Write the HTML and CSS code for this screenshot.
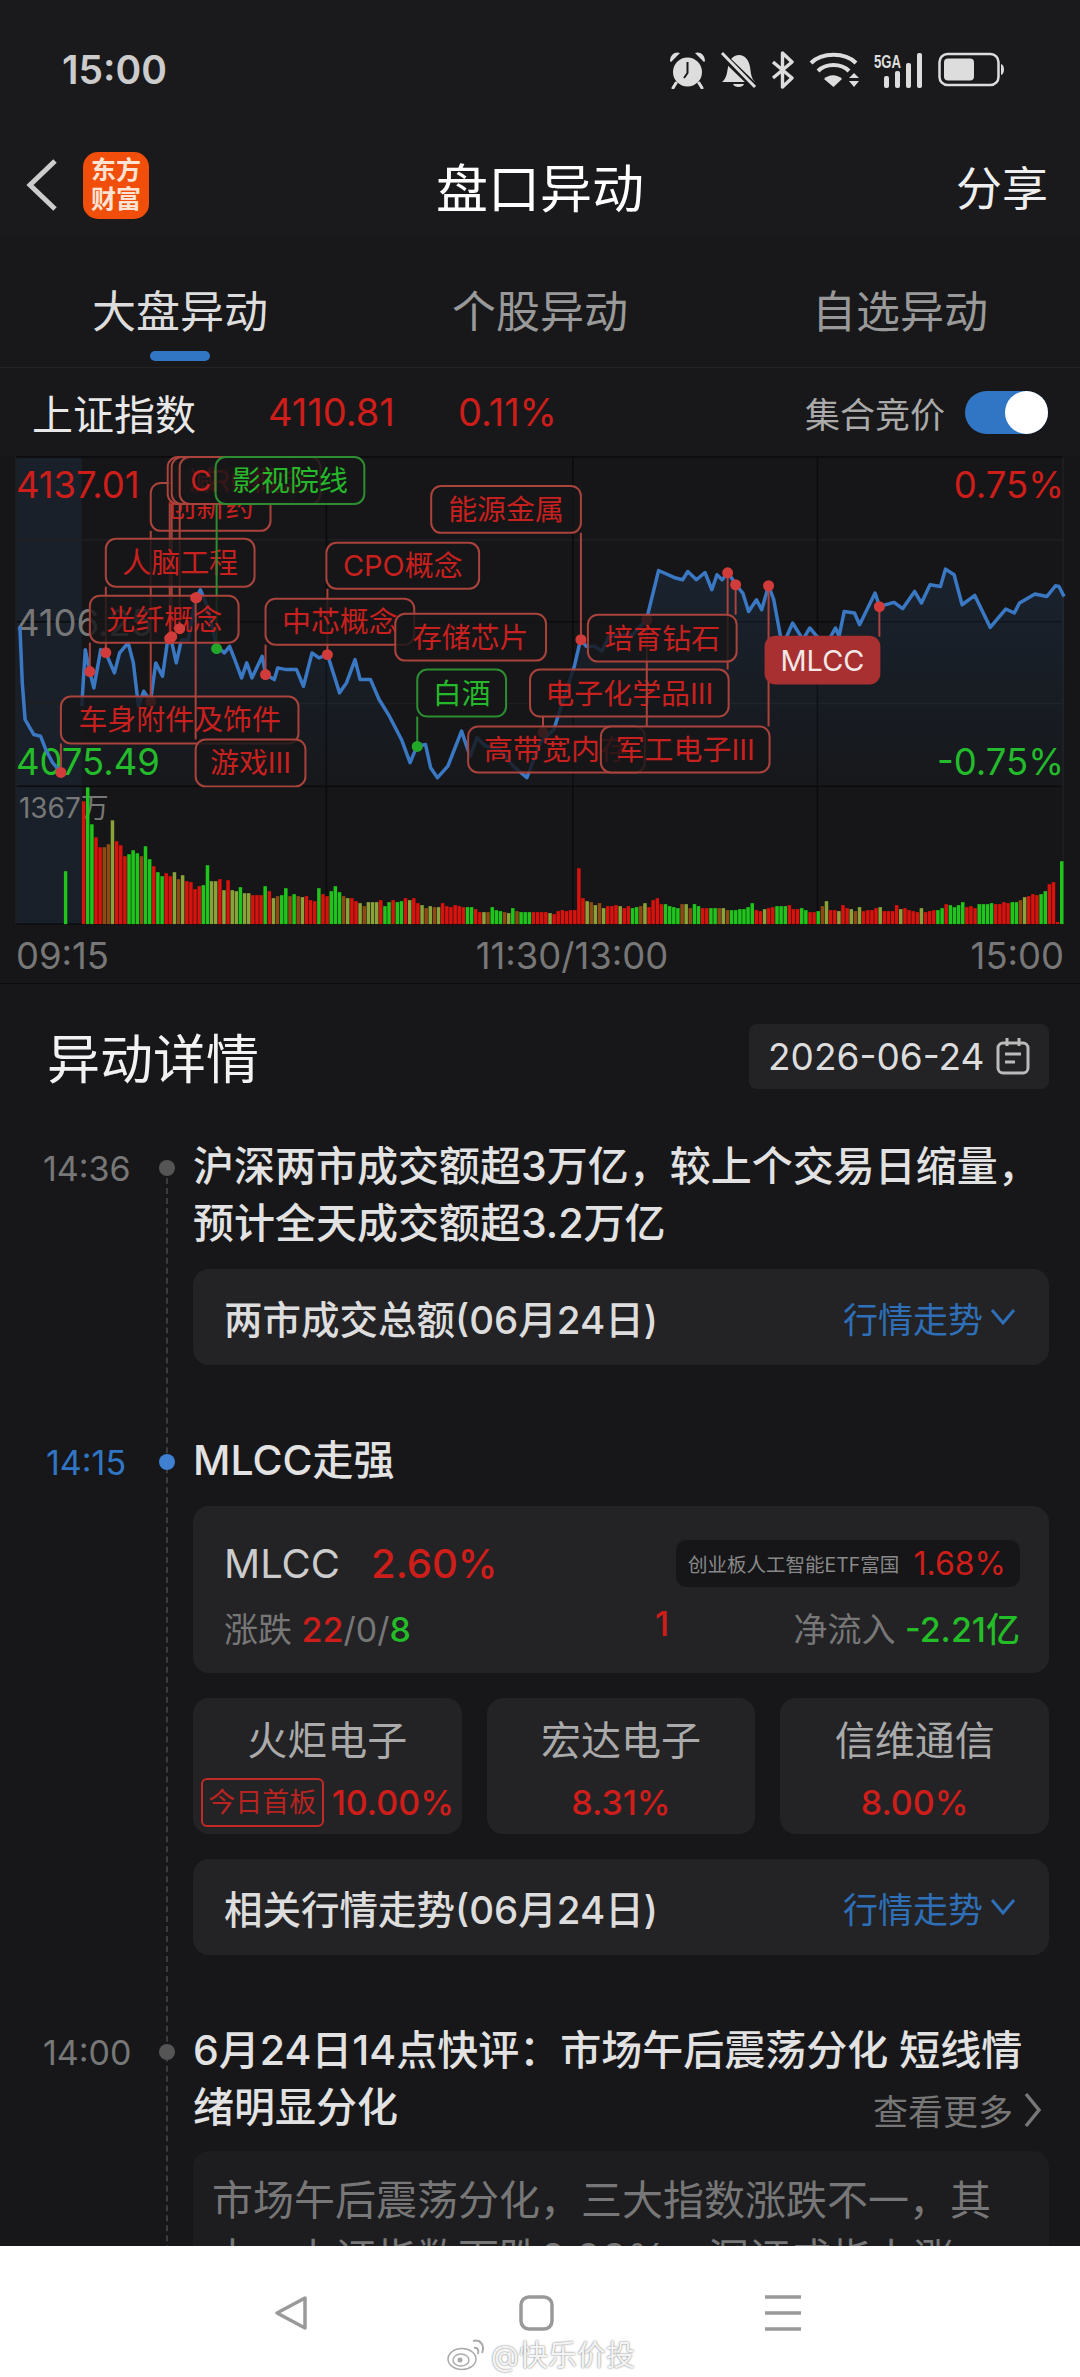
FILE: index.html
```html
<!DOCTYPE html>
<html lang="zh-CN">
<head>
  <meta charset="UTF-8" />
  <meta name="viewport" content="width=device-width, initial-scale=1.0"/>
  <title>盘口异动</title>
  <link rel="stylesheet" href="styles.css">
</head>
<body>
  <div class="page">
    <div class="status">
      <span class="clock">15:00</span>
      <div class="status-icons">
        <svg width="37" height="38" viewBox="0 0 37 38">
          <circle cx="18.5" cy="21" r="14.5" fill="#ddd"/>
          <path d="M1 10 C1 3 7 0 11 2 L2 11Z M36 10 C36 3 30 0 26 2 L35 11Z" fill="#ddd"/>
          <path d="M7 32 L4 37 M30 32 L33 37" stroke="#ddd" stroke-width="3" stroke-linecap="round"/>
          <path d="M18.5 11 V22 L15 27" stroke="#1a1a1c" stroke-width="2" fill="none"/>
        </svg>
        <svg width="37" height="38" viewBox="0 0 37 38">
          <path d="M2 31 C7 27 7 21 8 16 C9 8 14 4 19 4 C25 4 29 9 30 16 C31 22 31 27 35 31Z M13 33 H24 C23 37 14 37 13 33Z" fill="#ddd"/>
          <path d="M1 3 L35 36" stroke="#1a1a1c" stroke-width="7"/>
          <path d="M2 2 L35 36" stroke="#ddd" stroke-width="3"/>
        </svg>
        <svg width="24" height="38" viewBox="0 0 24 38">
          <path d="M2 11 L21 27 L11.5 36 V2 L21 11 L2 27" stroke="#ddd" stroke-width="3.4" fill="none" stroke-linejoin="round"/>
        </svg>
        <svg width="51" height="38" viewBox="0 0 51 38">
          <path d="M2 12 C13 1 36 1 47 12" stroke="#ddd" stroke-width="4" fill="none"/>
          <path d="M9 20 C17 12 32 12 40 20" stroke="#ddd" stroke-width="4" fill="none"/>
          <path d="M15 28 L24.5 36 L33 28 C28 23 20 23 15 28Z" fill="#ddd"/>
          <path d="M40 27 H50 L45 22Z M40 30 H50 L45 36Z" fill="#ddd"/>
        </svg>
        <svg width="50" height="38" viewBox="0 0 50 38">
          <text x="0" y="17" class="sig-text" textLength="27" lengthAdjust="spacingAndGlyphs">5GA</text>
          <rect x="10" y="25" width="5" height="12" rx="2" fill="#ddd"/>
          <rect x="21" y="20" width="5" height="17" rx="2" fill="#ddd"/>
          <rect x="32" y="12" width="5" height="25" rx="2" fill="#ddd"/>
          <rect x="43" y="2" width="5" height="35" rx="2" fill="#ddd"/>
        </svg>
        <svg width="67" height="38" viewBox="0 0 67 38">
          <rect x="1.5" y="3" width="59" height="31" rx="8" stroke="#ddd" stroke-width="2.5" fill="none"/>
          <rect x="6" y="7.5" width="30" height="22" rx="4" fill="#ddd"/>
          <path d="M63 13 C67 14 67 23 63 24Z" fill="#ddd"/>
        </svg>
      </div>
    </div>

    <div class="nav">
      <svg class="back" width="32" height="54" viewBox="0 0 32 54">
        <path d="M29 3 L4 27 L29 51" stroke="#ccc" stroke-width="5" fill="none"/>
      </svg>
      <div class="logo">东方<br>财富</div>
      <div class="nav-title">盘口异动</div>
      <div class="share">分享</div>
    </div>

    <div class="tabs">
      <div class="tab active"><span>大盘异动</span><i></i></div>
      <div class="tab"><span>个股异动</span><i></i></div>
      <div class="tab"><span>自选异动</span><i></i></div>
    </div>

    <div class="quote">
      <span class="quote-name">上证指数</span>
      <span class="quote-price">4110.81</span>
      <span class="quote-pct">0.11%</span>
      <span class="quote-auction">集合竞价</span>
      <span class="toggle"><b></b></span>
    </div>

    <svg id="chart" class="chart" width="1080" height="528" viewBox="0 456 1080 528"></svg>

    <div class="details">
      <div class="details-head">
        <h2>异动详情</h2>
        <div class="date-pill">
          <span>2026-06-24</span>
          <svg width="34" height="38" viewBox="0 0 34 38">
            <rect x="2" y="6" width="30" height="30" rx="5" stroke="#bbb" stroke-width="3" fill="none"/>
            <path d="M11 1 V9 M23 1 V9 M9 17 H25 M9 25 H19" stroke="#bbb" stroke-width="3" fill="none"/>
          </svg>
        </div>
      </div>

      <div class="timeline">
        <div class="event">
          <div class="when"><span>14:36</span><i></i></div>
          <div class="body">
            <div class="title">沪深两市成交额超3万亿，较上个交易日缩量，<br>预计全天成交额超3.2万亿</div>
            <div class="card trend">
              <span class="trend-name">两市成交总额(06月24日)</span>
              <span class="trend-link">行情走势
                <svg width="26" height="18" viewBox="0 0 26 18"><path d="M2 2 L13 15 L24 2" stroke="#2e6fb8" stroke-width="3" fill="none"/></svg>
              </span>
            </div>
          </div>
        </div>

        <div class="event">
          <div class="when now"><span>14:15</span><i></i></div>
          <div class="body">
            <div class="title">MLCC走强</div>
            <div class="card sector">
              <div class="sector-top">
                <span class="sector-name">MLCC</span>
                <span class="sector-pct red">2.60%</span>
                <span class="etf"><em>创业板人工智能ETF富国</em><b class="red">1.68%</b></span>
              </div>
              <div class="sector-bottom">
                <span class="rise-fall">涨跌 <b class="red">22</b>/0/<b class="green">8</b></span>
                <span class="board"><b class="red">1</b></span>
                <span class="inflow">净流入 <b class="green">-2.21亿</b></span>
              </div>
            </div>
            <div class="stocks">
              <div class="card stock">
                <div class="stock-name">火炬电子</div>
                <div class="stock-pct"><span class="tag">今日首板</span><b class="red">10.00%</b></div>
              </div>
              <div class="card stock">
                <div class="stock-name">宏达电子</div>
                <div class="stock-pct"><b class="red">8.31%</b></div>
              </div>
              <div class="card stock">
                <div class="stock-name">信维通信</div>
                <div class="stock-pct"><b class="red">8.00%</b></div>
              </div>
            </div>
            <div class="card trend">
              <span class="trend-name">相关行情走势(06月24日)</span>
              <span class="trend-link">行情走势
                <svg width="26" height="18" viewBox="0 0 26 18"><path d="M2 2 L13 15 L24 2" stroke="#2e6fb8" stroke-width="3" fill="none"/></svg>
              </span>
            </div>
          </div>
        </div>

        <div class="event">
          <div class="when"><span>14:00</span><i></i></div>
          <div class="body">
            <div class="title">6月24日14点快评：市场午后震荡分化 短线情</div>
            <div class="title-row">
              <div class="title">绪明显分化</div>
              <span class="more">查看更多
                <svg width="18" height="36" viewBox="0 0 18 36"><path d="M2 2 L15 18 L2 34" stroke="#777" stroke-width="3.5" fill="none"/></svg>
              </span>
            </div>
            <div class="summary">市场午后震荡分化，三大指数涨跌不一，其<br>中，上证指数下跌0.03%，深证成指上涨</div>
          </div>
        </div>
      </div>
    </div>

    <div class="softkeys">
      <svg width="34" height="36" viewBox="0 0 34 36">
        <path d="M31 3 L3 18 L31 33Z" stroke="#999" stroke-width="3.5" fill="none" stroke-linejoin="round"/>
      </svg>
      <svg width="35" height="36" viewBox="0 0 35 36">
        <rect x="2" y="2" width="31" height="32" rx="8" stroke="#999" stroke-width="3.5" fill="none"/>
      </svg>
      <svg width="36" height="36" viewBox="0 0 36 36">
        <path d="M0 2 H36 M0 18 H36 M0 34 H36" stroke="#999" stroke-width="3.5"/>
      </svg>
      <div class="watermark">
        <svg width="40" height="36" viewBox="0 0 40 36">
          <ellipse cx="15" cy="24" rx="14" ry="10.5" fill="#fff" stroke="#aaa" stroke-width="1.5"/>
          <ellipse cx="14" cy="25" rx="8" ry="6" fill="none" stroke="#aaa" stroke-width="1.5"/>
          <circle cx="13" cy="25" r="2.5" fill="#aaa"/>
          <path d="M27 13 C31 12 32 16 31 19 M26 6 C34 4 38 11 35 18" stroke="#aaa" stroke-width="2" fill="none"/>
        </svg>
        <span>@快乐价投</span>
      </div>
    </div>
  </div>

  <script src="chart.js"></script>
</body>
</html>
```

FILE: styles.css
```css
* {
  box-sizing: border-box;
}

body {
  margin: 0;
  background-color: #18181a;
  font-family: Inter, "Noto Sans CJK SC", sans-serif;
  color: #ddd;
}

i, em {
  font-style: normal;
}

b {
  font-weight: 400;
}

.red {
  color: #cf1d1a;
}

.green {
  color: #23bd27;
}

.page {
  width: 1080px;
  height: 2377px;
  overflow: hidden;
  display: flex;
  flex-direction: column;
}

/* status bar */
.status {
  height: 138px;
  flex: none;
  padding: 0 75px 0 62px;
  display: flex;
  align-items: center;
  justify-content: space-between;
  background-color: #1a1a1c;
}

.clock {
  font-size: 39px;
  font-weight: 600;
  color: #ccc;
}

.status-icons {
  display: flex;
  align-items: center;
  gap: 14px;
  padding-top: 2px;
}

.sig-text {
  font-family: "Liberation Sans", sans-serif;
  font-size: 18px;
  font-weight: 700;
  fill: #ddd;
}

/* nav */
.nav {
  height: 98px;
  flex: none;
  position: relative;
  display: flex;
  align-items: center;
  padding: 0 0 4px 26px;
  background-color: #1a1a1c;
}

.logo {
  width: 66px;
  height: 67px;
  margin-left: 25px;
  border-radius: 15px;
  background-color: #f04e0a;
  color: #fde3d3;
  font-size: 25px;
  font-weight: 700;
  line-height: 29px;
  text-align: center;
  padding-top: 4px;
}

.nav-title {
  position: absolute;
  left: 0;
  right: 0;
  text-align: center;
  font-size: 52px;
  font-weight: 400;
  color: #fff;
}

.share {
  margin-left: auto;
  margin-right: 32px;
  font-size: 46px;
  color: #eee;
}

/* tabs */
.tabs {
  height: 132px;
  flex: none;
  padding-top: 48px;
  display: flex;
  border-bottom: 1px solid #242426;
}

.tab {
  flex: 1;
  display: flex;
  flex-direction: column;
  align-items: center;
  font-size: 44px;
  line-height: 56px;
  color: #999;
}

.tab i {
  width: 60px;
  height: 10px;
  margin-top: 11px;
  border-radius: 5px;
}

.tab.active {
  color: #ddd;
}

.tab.active i {
  background-color: #3176c4;
}

/* index row */
.quote {
  height: 88px;
  flex: none;
  padding: 0 32px;
  display: flex;
  align-items: center;
}

.quote-name {
  width: 236px;
  font-size: 41px;
  color: #e8e8e8;
}

.quote-price, .quote-pct {
  font-size: 38px;
  color: #cf1d1a;
}

.quote-price {
  width: 190px;
}

.quote-auction {
  margin-left: auto;
  font-size: 35px;
  color: #aaa;
}

.toggle {
  width: 83px;
  height: 43px;
  margin-left: 20px;
  padding-left: 40px;
  border-radius: 22px;
  background-color: #3176c4;
  display: block;
}

.toggle b {
  display: block;
  width: 43px;
  height: 43px;
  border-radius: 50%;
  background-color: #fff;
}

/* chart, drawn by chart.js */
.chart {
  display: block;
  flex: none;
  background-color: #161618;
  border-bottom: 1px solid #0c0c0d;
  font-family: Inter, "Noto Sans CJK SC", sans-serif;
}

.axis {
  font-size: 36.5px;
  dominant-baseline: central;
}

.axis.small {
  font-size: 28px;
}

.lab-text {
  font-size: 29px;
  text-anchor: middle;
  dominant-baseline: central;
  fill: #c8201e;
}

.lab-box {
  fill: rgba(22, 22, 24, 0.82);
  stroke: #a9433c;
  stroke-width: 2;
}

.lab-stem {
  stroke: #a9433c;
  stroke-width: 2;
}

.lab.up .lab-dot {
  fill: #d13c3a;
}

.lab.down .lab-box, .lab.down .lab-stem {
  stroke: #2c8e31;
}

.lab.down .lab-text {
  fill: #25b82a;
}

.lab.down .lab-dot {
  fill: #22a72a;
}

.lab.hot .lab-box {
  fill: #a83030;
  stroke: #a83030;
}

.lab.hot .lab-text {
  fill: #f2e8e8;
}

/* details */
.details {
  flex: 1;
  min-height: 0;
  overflow: hidden;
  padding-top: 34px;
  background-color: #17171a;
}

.details-head {
  padding: 0 31px 0 47px;
  display: flex;
  align-items: center;
  justify-content: space-between;
}

.details-head h2 {
  margin: 0;
  font-size: 53px;
  font-weight: 400;
  color: #f2f2f2;
}

.date-pill {
  width: 300px;
  height: 65px;
  padding: 0 19px;
  border-radius: 8px;
  background-color: #232325;
  display: flex;
  align-items: center;
  justify-content: space-between;
  font-size: 37px;
  color: #ddd;
}

.timeline {
  position: relative;
  margin-top: 44px;
  padding: 0 31px 0 43px;
}

.timeline::before {
  content: "";
  position: absolute;
  left: 166px;
  top: 40px;
  bottom: 0;
  border-left: 2px dashed #3c3c3e;
}

.event {
  display: grid;
  grid-template-columns: 150px 1fr;
  margin-bottom: 67px;
}

.when {
  height: 60px;
  display: flex;
  align-items: center;
  font-size: 34px;
  color: #777;
  position: relative;
}

.when span {
  width: 116px;
}

.when i {
  width: 16px;
  height: 16px;
  border-radius: 50%;
  background-color: #555;
}

.when.now {
  color: #3176c4;
}

.when.now span {
  padding-left: 3px;
}

.when.now i {
  background-color: #3f80d0;
}

.title {
  font-size: 41px;
  font-weight: 500;
  line-height: 57px;
  color: #e2e2e2;
}

.title-row {
  display: flex;
  justify-content: space-between;
}

.more {
  display: flex;
  align-items: center;
  gap: 11px;
  padding: 4px 7px 0 0;
  font-size: 35px;
  color: #777;
}

.card {
  border-radius: 16px;
  background-color: #232326;
}

.trend {
  height: 96px;
  margin-top: 17px;
  padding: 0 33px 0 31px;
  display: flex;
  align-items: center;
  justify-content: space-between;
}

.trend-name {
  font-size: 38.5px;
  font-weight: 500;
  color: #ddd;
}

.trend-link {
  display: flex;
  align-items: center;
  gap: 7px;
  font-size: 35px;
  color: #2e6fb8;
}

.sector {
  height: 167px;
  margin-top: 17px;
  padding: 33px 29px 0 31px;
}

.sector-top {
  display: flex;
  align-items: center;
}

.sector-name {
  width: 147px;
  font-size: 40px;
  color: #ccc;
}

.sector-pct {
  font-size: 40px;
  font-weight: 500;
}

.etf {
  margin-left: auto;
  width: 344px;
  height: 47px;
  padding: 0 14px 0 12px;
  border-radius: 10px;
  background-color: #161618;
  display: flex;
  align-items: center;
  justify-content: space-between;
  font-size: 19.5px;
  color: #888;
}

.etf b {
  font-size: 32px;
}

.sector-bottom {
  margin-top: 15px;
  display: flex;
  font-size: 34px;
  color: #777;
}

.sector-bottom b {
  font-weight: 500;
}

.rise-fall {
  width: 431px;
}

.inflow {
  margin-left: auto;
}

.stocks {
  margin-top: 25px;
  display: grid;
  grid-template-columns: repeat(3, 1fr);
  gap: 25px;
}

.stock {
  height: 136px;
  padding-top: 16px;
  text-align: center;
}

.stock-name {
  font-size: 40px;
  line-height: 54px;
  color: #aaa;
}

.stock-pct {
  height: 50px;
  margin-top: 9px;
  display: flex;
  align-items: center;
  justify-content: center;
  font-size: 34px;
}

.stock-pct b {
  font-weight: 500;
}

.tag {
  width: 123px;
  height: 49px;
  margin-right: 8px;
  border: 2px solid #c42a25;
  border-radius: 6px;
  font-size: 27px;
  line-height: 45px;
  color: #b92420;
}

.stocks + .trend {
  margin-top: 25px;
}

.summary {
  height: 200px;
  margin-top: 15px;
  padding: 20px 19px 0;
  border-radius: 16px;
  background-color: #1d1d20;
  font-size: 41px;
  line-height: 58px;
  color: #777;
}

/* phone soft keys */
.softkeys {
  height: 131px;
  flex: none;
  position: relative;
  padding: 49px 6px 0 0;
  background-color: #fff;
  display: flex;
  justify-content: center;
  align-items: flex-start;
  gap: 211px;
}

.watermark {
  position: absolute;
  left: 447px;
  top: 86px;
  display: flex;
  align-items: center;
  gap: 4px;
  font-size: 29px;
  color: #f4f4f4;
  text-shadow: 0 0 2px #666;
}
```

FILE: chart.js
```js
const svg = document.getElementById('chart');
const NS = 'http://www.w3.org/2000/svg';

function add(parent, tag, attrs, text) {
  const el = document.createElementNS(NS, tag);
  for (const k in attrs) el.setAttribute(k, attrs[k]);
  if (text) el.textContent = text;
  parent.appendChild(el);
  return el;
}

// backdrop and grid
add(svg, 'rect', { x: 15, y: 457, width: 66, height: 468, fill: '#1a2029' });
[540, 704].forEach(y => add(svg, 'path', { d: `M15 ${y}H1064`, stroke: '#1f1f21', 'stroke-width': 1.5 }));
[457, 622, 787, 925].forEach(y => add(svg, 'path', { d: `M15 ${y}H1064`, stroke: '#0b0b0c', 'stroke-width': 1.5 }));
[326, 573, 818].forEach(x => add(svg, 'path', { d: `M${x} 457V925`, stroke: '#0b0b0c', 'stroke-width': 1.5 }));
add(svg, 'path', { d: 'M15 457V925M1064 457V925', stroke: '#202022', 'stroke-width': 1.5 });

// axis text sits under the labels
const axis = [
  ['4137.01', 15, 485, '#cf1d1a', 'start'],
  ['4106.25', 15, 623, '#777', 'start'],
  ['4075.49', 15, 763, '#23bd27', 'start'],
  ['0.75%', 1065, 485, '#cf1d1a', 'end'],
  ['-0.75%', 1065, 763, '#23bd27', 'end'],
  ['09:15', 15, 957, '#777', 'start'],
  ['11:30/13:00', 572, 957, '#777', 'middle'],
  ['15:00', 1065, 957, '#777', 'end']
];
axis.forEach(([t, x, y, fill, anchor]) => {
  add(svg, 'text', { class: 'axis', x, y, fill, 'text-anchor': anchor }, t);
});
add(svg, 'text', { class: 'axis small', x: 18, y: 809, fill: '#777' }, '1367万');

// price line, points read off the picture in two halves
const auction = [[55,530],[62,700],[70,810],[95,855],[115,860],[130,900],[150,940],[175,970]];
const morning = [[235,770],[245,600],[258,665],[270,715],[290,600],[305,610],[330,670],[345,610],[370,580],[385,640],[400,770],[415,725],[435,755],[450,640],[470,680],[485,570],[495,570],[510,640],[525,570],[545,570],[565,450],[580,420],[600,470],[628,590],[650,610],[665,590],[680,630],[700,685],[715,640],[730,685],[760,620],[770,675],[795,690],[805,655],[830,660],[860,660],[880,710],[905,610],[925,625],[950,615],[985,730],[1005,700],[1030,630],[1045,690],[1075,690],[1100,750],[1130,800],[1165,870],[1190,940],[1210,890],[1235,885],[1250,955],[1270,985],[1300,950],[1340,845],[1365,920],[1385,865],[1410,890],[1450,900],[1490,950],[1530,985]];
const afternoon = [[0,880],[40,840],[100,650],[118,570],[135,590],[160,590],[180,605],[200,560],[270,555],[310,510],[345,362],[395,385],[415,390],[430,365],[455,390],[480,368],[500,420],[515,375],[530,390],[547,368],[570,405],[590,430],[607,485],[630,450],[645,480],[665,408],[680,450],[705,590],[735,520],[765,570],[785,535],[830,590],[860,535],[870,560],[885,485],[915,490],[930,525],[975,430],[988,470],[1030,458],[1055,477],[1090,425],[1110,460],[1135,405],[1165,410],[1180,358],[1205,375],[1228,465],[1265,437],[1310,533],[1355,478],[1380,490],[1395,460],[1440,433],[1475,440],[1500,408],[1510,410],[1525,440]];

const toLeft = p => [(p[0] / 2.904).toFixed(1), (450 + p[1] / 3).toFixed(1)];
const toRight = p => [(540 + p[0] / 2.904).toFixed(1), (450 + p[1] / 3).toFixed(1)];
const auctionPts = auction.map(toLeft);
const dayPts = morning.map(toLeft).concat(afternoon.map(toRight));
const dayStr = dayPts.map(p => p.join(',')).join(' ');

const grad = add(add(svg, 'defs', {}), 'linearGradient', { id: 'area', x1: 0, y1: 0, x2: 0, y2: 1 });
add(grad, 'stop', { offset: '0', 'stop-color': '#3176c4', 'stop-opacity': 0.13 });
add(grad, 'stop', { offset: '1', 'stop-color': '#3176c4', 'stop-opacity': 0.02 });
add(svg, 'polygon', { points: `${dayPts[0][0]},787 ${dayStr} 1065,787`, fill: 'url(#area)' });
[auctionPts.map(p => p.join(',')).join(' '), dayStr].forEach(points => {
  add(svg, 'polyline', { points, fill: 'none', stroke: '#3a78c4', 'stroke-width': 3.5, 'stroke-linejoin': 'round' });
});

// volume bars: colour letter + height
const BAR_COLORS = { r: '#d8120c', g: '#1fc51c', o: '#8aa23a', b: '#8f4a14' };
const vols = 'r123 g137 g100 r87 r77 b77 b80 o104 r83 r79 r68 g70 g74 g71 b68 g78 g65 r58 g52 g48 r51 r48 o52 b45 o49 r43 r42 r35 r38 g39 g59 o43 o43 r45 o34 r44 o34 o33 g37 o31 o31 r29 r29 r29 g38 r33 o26 b28 g29 g36 b28 g30 b28 o27 r28 r24 r23 g36 r30 r28 g33 g38 g32 b28 o26 r26 r23 o21 b18 o22 o22 o22 r24 g18 g22 r24 g22 g23 r26 o24 r26 r21 o19 b16 o18 b17 o17 r21 r18 r17 r19 r18 r17 g17 g17 r15 r12 o12 b12 g17 g14 g13 b12 o11 g16 b13 g12 g12 g12 r12 r12 r12 r12 o11 r10 r13 r14 r13 r14 r14 r56 r26 o23 b22 o19 b21 o16 r18 r18 r19 o18 r16 r18 g16 g17 b18 o21 r17 r24 r26 r20 g20 g18 g17 g16 b20 o20 b16 g20 g18 r16 r16 g16 g16 b16 o16 b14 g14 g14 g15 g15 g17 g21 r14 r13 o15 r16 r17 g18 g18 g18 r19 r15 r15 g16 g14 r12 r12 g13 b18 o23 r14 r14 o13 r19 r16 o15 b13 o17 r13 r14 r14 r16 o17 r13 r13 r13 r19 o15 r16 r14 r13 r12 o16 r12 r13 r14 g14 g16 r20 g19 g17 g19 g22 r17 r18 r16 g20 g20 g20 g21 r20 r20 r22 r21 g22 g22 b24 o27 r28 r30 r29 g30 g33 r40 r42 r2 g63'.split(' ');
const pitch = (1062 - 82) / (vols.length - 1);
add(svg, 'rect', { x: 63, y: 872, width: 3.4, height: 53, fill: BAR_COLORS.g });
vols.forEach((v, i) => {
  const h = Number(v.slice(1));
  add(svg, 'rect', { x: (81 + i * pitch).toFixed(1), y: 925 - h, width: 3.5, height: h, fill: BAR_COLORS[v[0]] });
});

// labels, painted in this order: [text, box x, y, width, height, kind, extra dot, dot]
const labels = [
  ['创新药', 150, 483, 120, 48, 'up', null, [150, 702]],
  ['减肥药', 167, 457, 105, 47, 'up', null, [169, 639]],
  ['减肥药', 171, 457, 122, 47, 'up', null, [171, 637]],
  ['CRO概念', 179, 457, 141, 47, 'up', null, [179, 629]],
  ['人脑工程', 105, 539, 149, 48, 'up', null, [105, 653]],
  ['影视院线', 215, 457, 149, 47, 'down', null, [216, 649]],
  ['光纤概念', 89, 596, 149, 47, 'up', null, [89, 672]],
  ['车身附件及饰件', 60, 697, 238, 47, 'up', null, [60, 773]],
  ['游戏III', 195, 740, 110, 47, 'up', null, [195, 598]],
  ['CPO概念', 326, 543, 153, 46, 'up', null, [327, 655]],
  ['中芯概念', 265, 599, 149, 46, 'up', null, [265, 675]],
  ['能源金属', 431, 486, 150, 47, 'up', null, [581, 640]],
  ['存储芯片', 395, 614, 151, 47, 'up', null, null],
  ['白酒', 417, 670, 89, 47, 'down', null, [417, 747]],
  ['电子化学品III', 530, 670, 199, 47, 'up', [543, 733], [728, 573]],
  ['高带宽内存', 468, 727, 177, 46, 'up', null, [647, 620]],
  ['培育钻石', 588, 615, 149, 47, 'up', null, [736, 585]],
  ['军工电子III', 601, 727, 169, 46, 'up', null, [769, 586]],
  ['MLCC', 766, 637, 114, 47, 'up hot', null, [880, 607]]
];

labels.forEach(([text, x, y, w, h, kind, extra, dot]) => {
  const g = add(svg, 'g', { class: `lab ${kind}` });
  if (dot) {
    const edge = dot[1] < y ? y : y + h;
    add(g, 'path', { class: 'lab-stem', d: `M${dot[0]} ${dot[1]}V${edge}` });
    add(g, 'circle', { class: 'lab-dot', cx: dot[0], cy: dot[1], r: 5.5 });
  }
  if (extra) {
    add(g, 'path', { class: 'lab-stem', d: `M${extra[0]} ${extra[1]}V${y + h}` });
    add(g, 'circle', { class: 'lab-dot', cx: extra[0], cy: extra[1], r: 5.5 });
  }
  add(g, 'rect', { class: 'lab-box', x, y, width: w, height: h, rx: 10 });
  add(g, 'text', { class: 'lab-text', x: x + w / 2, y: y + h / 2 }, text);
});

// these dots sit above the later boxes
const topDots = add(svg, 'g', { class: 'lab up' });
[[169, 639], [171, 637], [179, 629], [196, 598]].forEach(([cx, cy]) => {
  add(topDots, 'circle', { class: 'lab-dot', cx, cy, r: 5.5 });
});
```
